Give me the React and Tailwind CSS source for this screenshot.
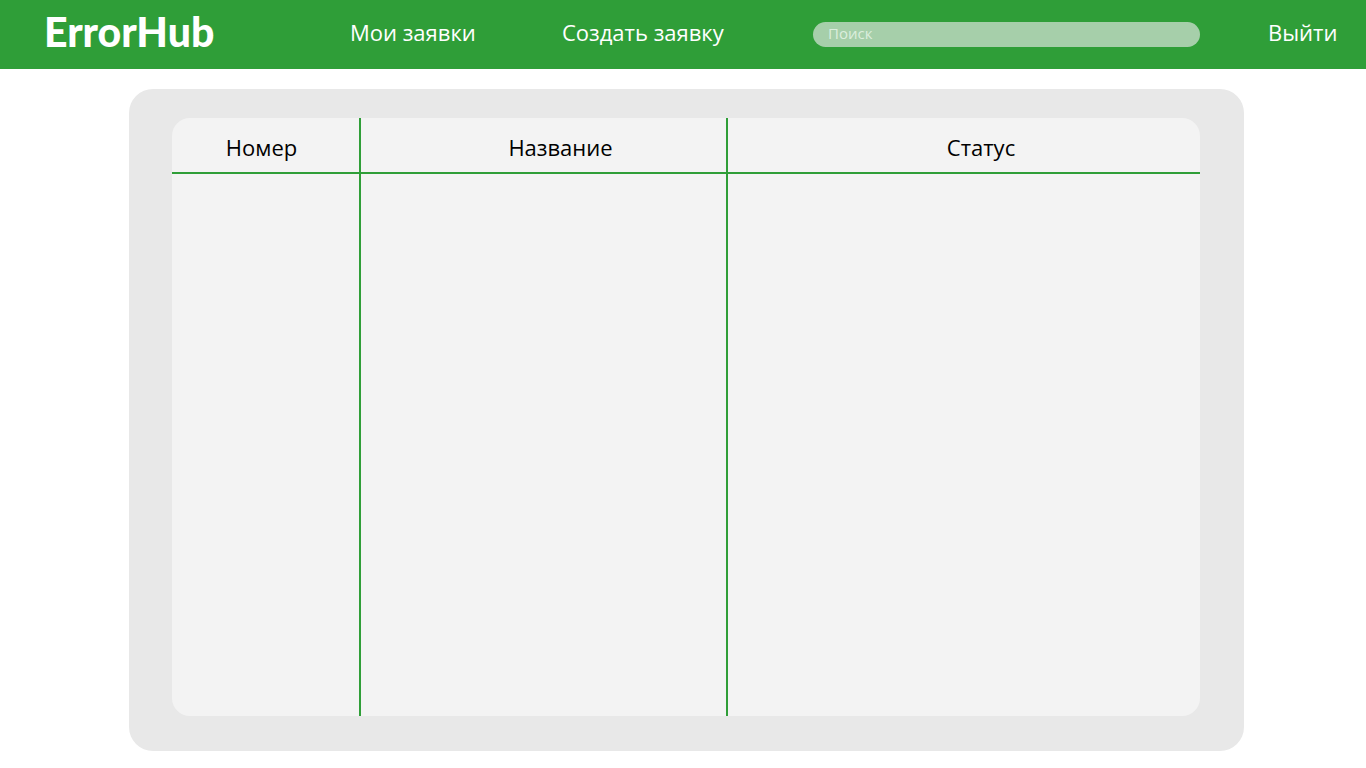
const links = [
  { label: "Мои заявки", width: "w-[212px]" },
  { label: "Создать заявку", width: "w-[251px]" },
];

function Header() {
  return (
    <header className="flex h-[69px] items-center bg-[#2f9e38] pr-[30px] pl-11 text-white">
      <a href="#home" className="w-[306px] shrink-0 pb-1.5 font-['Lato','Open_Sans',sans-serif] text-[41px] leading-12 font-black">
        ErrorHub
      </a>
      <nav className="flex shrink-0 pb-1.5">
        {links.map((link) => (
          <div key={link.label} className={link.width}>
            <a href="#requests" className="text-[22px] leading-8">
              {link.label}
            </a>
          </div>
        ))}
      </nav>
      <input
        type="search"
        aria-label="Поиск"
        placeholder="Поиск"
        className="h-[25px] min-w-0 flex-1 rounded-full bg-[#a6cfaa] px-[15px] pb-1 text-[15px] text-white outline-none placeholder:text-[#dceedd]"
      />
      <button type="button" className="ml-[68px] w-[68px] shrink-0 pb-1.5 text-left text-[22px] leading-8 whitespace-nowrap">
        Выйти
      </button>
    </header>
  );
}

function RequestsTable() {
  return (
    <div className="flex flex-1 overflow-hidden rounded-[18px] bg-[#f3f3f3]">
      <table className="w-full table-fixed border-separate border-spacing-0 text-[22px] leading-8 text-black">
        <thead>
          <tr className="h-14">
            <th scope="col" className="w-[189px] border-r-2 border-b-2 border-[#2f9e38] p-0 pt-1 pr-2 font-normal">
              Номер
            </th>
            <th scope="col" className="w-[367px] border-r-2 border-b-2 border-[#2f9e38] p-0 pt-1 pl-[34px] font-normal">
              Название
            </th>
            <th scope="col" className="border-b-2 border-[#2f9e38] p-0 pt-1 pl-[34px] font-normal">
              Статус
            </th>
          </tr>
        </thead>
        <tbody>
          <tr>
            <td className="border-r-2 border-[#2f9e38]" />
            <td className="border-r-2 border-[#2f9e38]" />
            <td />
          </tr>
        </tbody>
      </table>
    </div>
  );
}

export default function App() {
  return (
    <div className="flex min-h-screen flex-col bg-white font-['Open_Sans','Noto_Sans',sans-serif]">
      <Header />
      <main className="flex flex-1 flex-col pt-5 pr-[122px] pb-[17px] pl-[129px]">
        <section className="flex flex-1 flex-col rounded-3xl bg-[#e8e8e8] pt-[29px] pr-11 pb-[35px] pl-[43px]">
          <RequestsTable />
        </section>
      </main>
    </div>
  );
}
